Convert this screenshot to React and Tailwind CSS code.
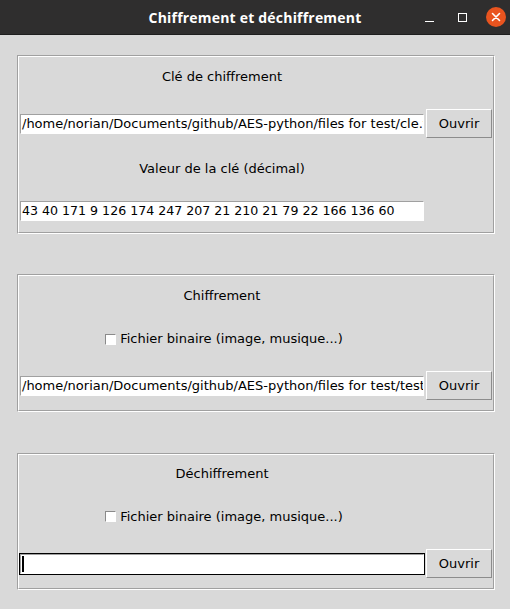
import React from "react";

function Frame({ className = "", children }) {
  return (
    <div className={"border border-t-[#a0a0a0] border-l-[#a0a0a0] border-b-white border-r-white " + className}>
      <div className="border border-t-white border-l-white border-b-[#a0a0a0] border-r-[#a0a0a0] flex flex-col">
        {children}
      </div>
    </div>
  );
}

function Entry({ text, focused, small }) {
  return (
    <div className={"h-[22px] w-[406px] border " + (focused ? "border-black" : "border-[#d9d9d9]")}>
      <div className={"h-full w-full bg-white border border-t-[#a0a0a0] border-l-[#a0a0a0] border-b-white border-r-white overflow-hidden whitespace-nowrap flex items-center pl-[1px] leading-none " + (small ? "text-[12.6px] " : "text-[13px] ") + (focused ? "border-t-[#3a3a3a] border-l-[#3a3a3a]" : "")}>
        {focused ? <div className="w-[2px] h-[16px] bg-black" /> : <span>{text}</span>}
      </div>
    </div>
  );
}

function Button() {
  return (
    <div className="h-[29px] w-[66px] bg-[#d9d9d9] border border-t-white border-l-white border-b-[#8c8c8c] border-r-[#8c8c8c] flex items-center justify-center">
      Ouvrir
    </div>
  );
}

function Check() {
  return (
    <div className="flex items-center gap-[4px]">
      <div className="w-[11px] h-[11px] bg-white border border-t-[#8a8a8a] border-l-[#8a8a8a] border-b-white border-r-white" />
      <span>Fichier binaire (image, musique...)</span>
    </div>
  );
}

export default function App() {
  return (
    <div className="w-[510px] h-[609px] bg-[#d9d9d9] overflow-hidden text-[13px] text-black font-['DejaVu_Sans',sans-serif]">
      <div className="h-[35px] bg-[#2f2e2e] border-b border-[#1e1e1e] flex items-center justify-between">
        <div className="w-[90px]" />
        <div className="text-white font-bold text-[14px] font-['Open_Sans','DejaVu_Sans',sans-serif] tracking-[0.2px]">
          Chiffrement et déchiffrement
        </div>
        <div className="w-[90px] flex items-center justify-end pr-[4px]">
          <div className="h-[20px] flex items-end pb-[5px]">
            <div className="w-[9px] h-[1.5px] bg-white" />
          </div>
          <div className="ml-[24px] w-[9px] h-[9px] border border-white" />
          <div className="ml-[19px] w-[20px] h-[20px] rounded-full bg-[#e9541f] flex items-center justify-center">
            <svg width="10" height="10" viewBox="0 0 10 10">
              <path d="M1.5 1.5 L8.5 8.5 M8.5 1.5 L1.5 8.5" stroke="white" strokeWidth="1.6" strokeLinecap="round" />
            </svg>
          </div>
        </div>
      </div>

      <div className="pl-[17px] pr-[15px] pt-[20px] flex flex-col">
        <Frame>
          <div className="grid grid-cols-[406px_66px] gap-x-[1px]">
            <div className="h-[40px] flex items-center justify-center">Clé de chiffrement</div>
            <div />
            <div className="mt-[12px] h-[29px] flex items-center">
              <Entry text="/home/norian/Documents/github/AES-python/files for test/cle.txt" />
            </div>
            <div className="mt-[12px]"><Button /></div>
            <div className="mt-[12px] h-[38px] flex items-center justify-center">Valeur de la clé (décimal)</div>
            <div />
            <div className="mt-[12px] h-[22px] flex items-center">
              <Entry small text="43 40 171 9 126 174 247 207 21 210 21 79 22 166 136 60" />
            </div>
            <div />
            <div className="h-[10px]" />
          </div>
        </Frame>

        <Frame className="mt-[40px]">
          <div className="grid grid-cols-[406px_66px] gap-x-[1px]">
            <div className="h-[40px] flex items-center justify-center">Chiffrement</div>
            <div />
            <div className="h-[46px] flex items-center justify-center pl-[4px]"><Check /></div>
            <div />
            <div className="mt-[9px] h-[29px] flex items-center">
              <Entry text="/home/norian/Documents/github/AES-python/files for test/test" />
            </div>
            <div className="mt-[9px]"><Button /></div>
            <div className="h-[10px]" />
          </div>
        </Frame>

        <Frame className="mt-[41px]">
          <div className="grid grid-cols-[406px_66px] gap-x-[1px]">
            <div className="h-[38px] flex items-center justify-center">Déchiffrement</div>
            <div />
            <div className="h-[47px] flex items-center justify-center pl-[4px]"><Check /></div>
            <div />
            <div className="mt-[9px] h-[29px] flex items-center">
              <Entry focused />
            </div>
            <div className="mt-[9px]"><Button /></div>
            <div className="h-[10px]" />
          </div>
        </Frame>
      </div>
    </div>
  );
}
